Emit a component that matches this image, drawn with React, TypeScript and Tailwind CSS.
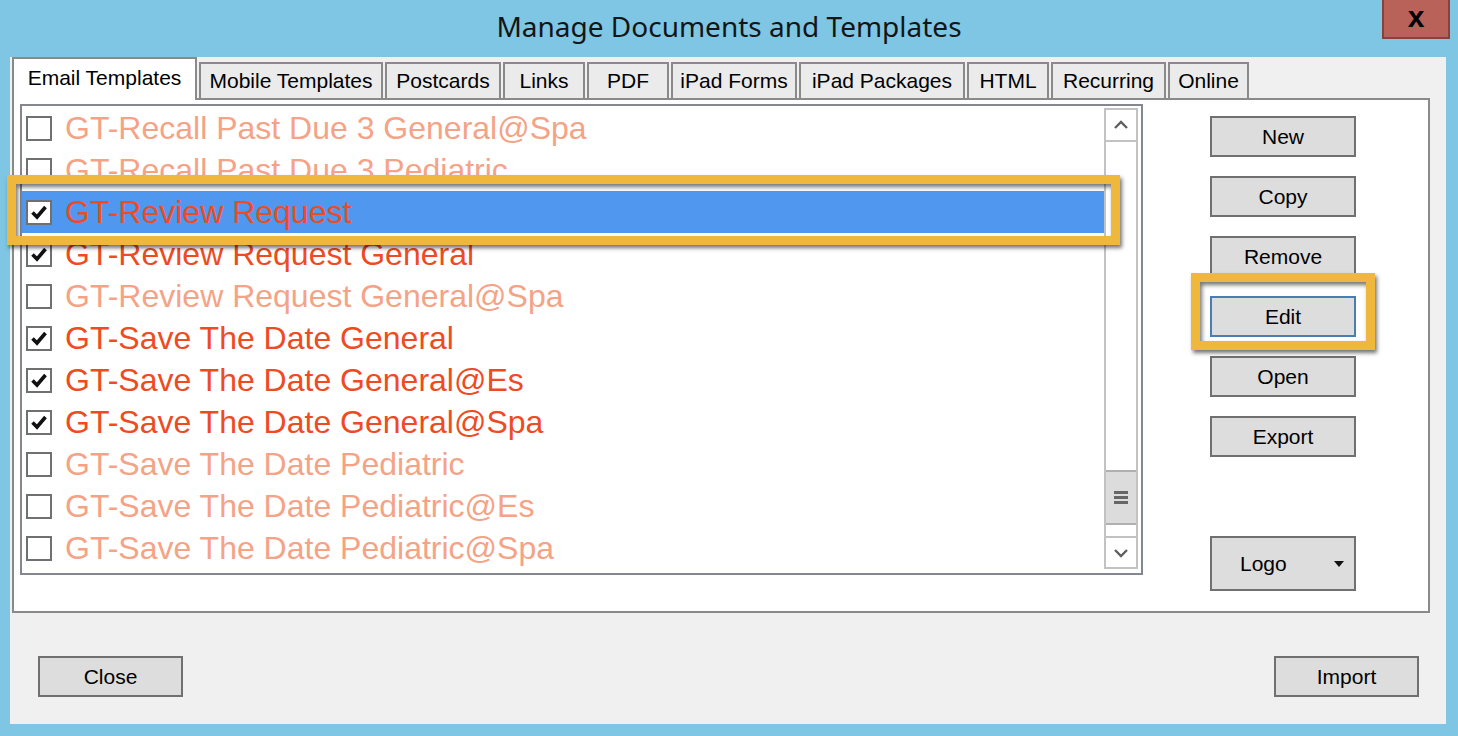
import React from "react";

type Row = { label: string; checked: boolean; selected?: boolean };

const ROWS: Row[] = [
  { label: "GT-Recall Past Due 3 General@Spa", checked: false },
  { label: "GT-Recall Past Due 3 Pediatric", checked: false },
  { label: "GT-Review Request", checked: true, selected: true },
  { label: "GT-Review Request General", checked: true },
  { label: "GT-Review Request General@Spa", checked: false },
  { label: "GT-Save The Date General", checked: true },
  { label: "GT-Save The Date General@Es", checked: true },
  { label: "GT-Save The Date General@Spa", checked: true },
  { label: "GT-Save The Date Pediatric", checked: false },
  { label: "GT-Save The Date Pediatric@Es", checked: false },
  { label: "GT-Save The Date Pediatric@Spa", checked: false },
];

const TABS = [
  { label: "Mobile Templates", w: "w-[184px]" },
  { label: "Postcards", w: "w-[116px]" },
  { label: "Links", w: "w-[82px]" },
  { label: "PDF", w: "w-[82px]" },
  { label: "iPad Forms", w: "w-[126px]" },
  { label: "iPad Packages", w: "w-[166px]" },
  { label: "HTML", w: "w-[82px]" },
  { label: "Recurring", w: "w-[115px]" },
  { label: "Online", w: "w-[81px]" },
];

const CheckBox = ({ checked }: { checked: boolean }) => (
  <div className="w-[26px] h-[25px] shrink-0 border-2 border-[#707070] bg-white flex items-center justify-center">
    {checked && (
      <svg width="18" height="16" viewBox="0 0 18 16">
        <polyline
          points="2.5,8.5 7,13 15.5,3"
          fill="none"
          stroke="#111"
          strokeWidth="3.6"
        />
      </svg>
    )}
  </div>
);

const WinButton = ({
  children,
  className = "w-[146px] h-[41px] justify-center border-[#707070]",
}: {
  children: React.ReactNode;
  className?: string;
}) => (
  <div
    className={`bg-[#dddddd] border-2 flex items-center text-[21px] text-black ${className}`}
  >
    {children}
  </div>
);

// orange callout frame drawn over the dialog
const Callout = ({ className }: { className: string }) => (
  <div
    className={`absolute border-[9px] border-[#efb83c] shadow-[2px_3px_4px_rgba(0,0,0,0.55),inset_2px_3px_4px_rgba(0,0,0,0.55)] pointer-events-none ${className}`}
  />
);

const ScrollBar = () => (
  <div className="w-[34px] mt-[2px] mb-[4px] mr-[3px] border-2 border-[#c2c2c2] flex flex-col bg-white">
    <div className="h-[32px] border-b-2 border-[#c2c2c2] flex items-center justify-center">
      <svg width="16" height="10" viewBox="0 0 16 10">
        <polyline points="2,8 8,2 14,8" fill="none" stroke="#606060" strokeWidth="2.4" />
      </svg>
    </div>
    <div className="flex-1" />
    <div className="h-[55px] bg-[#dcdcdc] border-y-2 border-[#b0b0b0] flex flex-col items-center justify-center gap-[2px]">
      <div className="w-[14px] h-[3px] bg-[#666]" />
      <div className="w-[14px] h-[3px] bg-[#666]" />
      <div className="w-[14px] h-[3px] bg-[#666]" />
    </div>
    <div className="h-[11px]" />
    <div className="h-[31px] border-t-2 border-[#c2c2c2] flex items-center justify-center">
      <svg width="16" height="10" viewBox="0 0 16 10">
        <polyline points="2,2 8,8 14,2" fill="none" stroke="#606060" strokeWidth="2.4" />
      </svg>
    </div>
  </div>
);

export default function App() {
  return (
    <div className="relative w-[1458px] h-[736px] overflow-hidden bg-[#7ec6e4] font-['Liberation_Sans',Arial,sans-serif] text-black">
      {/* title bar */}
      <div className="h-[57px] grid grid-cols-[1fr_auto_1fr]">
        <div />
        <div className="pt-[8px] leading-[37px] text-[28px] text-[#151515] font-['Noto_Sans',sans-serif]">
          Manage Documents and Templates
        </div>
        <div className="flex justify-end pr-[8px]">
          <div className="w-[68px] h-[39px] bg-[#b9625a] border-2 border-t-0 border-[#8c4037] flex items-start justify-center">
            <span className="text-[30px] font-bold leading-[34px]">x</span>
          </div>
        </div>
      </div>

      {/* dialog body */}
      <div className="ml-[10px] w-[1436px] h-[667px] bg-[#f0f0f0] pl-[2px] flex flex-col">
        <div className="relative z-10 h-[41px] flex items-end gap-[2px]">
          <div className="w-[185px] h-[43px] -mb-[2px] bg-white border-2 border-b-0 border-[#8a8a8a] flex items-center justify-center pb-[3px] text-[21px]">
            Email Templates
          </div>
          {TABS.map((t) => (
            <div
              key={t.label}
              className={`${t.w} h-[36px] bg-[#ebebeb] border-2 border-b-0 border-[#8a8a8a] flex items-center justify-center text-[21px]`}
            >
              {t.label}
            </div>
          ))}
        </div>

        <div className="w-[1418px] h-[515px] bg-white border-2 border-[#8a8a8a] flex pl-[6px] pt-[4px]">
          {/* template list */}
          <div className="w-[1123px] h-[471px] border-2 border-[#828790] flex">
            <div className="flex-1 pt-[1px] flex flex-col overflow-hidden">
              {ROWS.map((r) => (
                <div
                  key={r.label}
                  className={`h-[42px] shrink-0 flex items-center gap-[13px] pl-[4px] ${
                    r.selected ? "bg-[#4f97ef]" : ""
                  }`}
                >
                  <CheckBox checked={r.checked} />
                  <span
                    className={`text-[32px] leading-[42px] whitespace-nowrap ${
                      r.checked ? "text-[#ef4b23]" : "text-[#f5a386]"
                    }`}
                  >
                    {r.label}
                  </span>
                </div>
              ))}
            </div>
            <ScrollBar />
          </div>

          {/* action buttons */}
          <div className="ml-[67px] pt-[12px] flex flex-col gap-[19px]">
            <WinButton>New</WinButton>
            <WinButton>Copy</WinButton>
            <WinButton>Remove</WinButton>
            <WinButton className="w-[146px] h-[41px] justify-center border-[#4a7db3]">Edit</WinButton>
            <WinButton>Open</WinButton>
            <WinButton>Export</WinButton>
            <WinButton className="w-[146px] h-[55px] mt-[60px] justify-between pl-[28px] pr-[10px] border-[#707070]">
              <span>Logo</span>
              <svg width="10" height="6" viewBox="0 0 10 6">
                <polygon points="0,0 10,0 5,6" fill="#111" />
              </svg>
            </WinButton>
          </div>
        </div>

        <div className="flex-1 flex items-start justify-between pt-[43px] pl-[26px] pr-[27px]">
          <WinButton className="w-[145px] h-[41px] justify-center border-[#707070]">Close</WinButton>
          <WinButton className="w-[145px] h-[41px] justify-center border-[#707070]">Import</WinButton>
        </div>
      </div>

      <Callout className="left-[7px] top-[175px] w-[1113px] h-[70px]" />
      <Callout className="left-[1191px] top-[273px] w-[184px] h-[77px]" />
    </div>
  );
}
